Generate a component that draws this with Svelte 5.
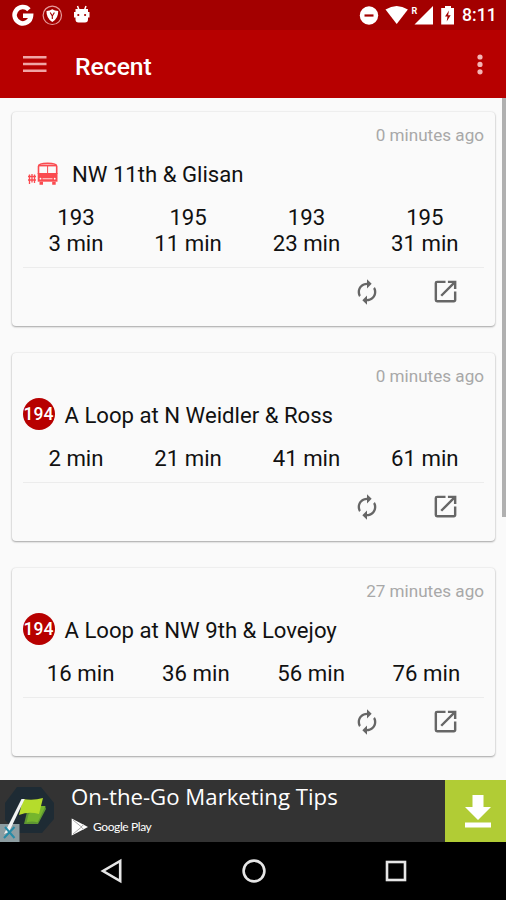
<script>
  const stops = [
    {
      name: 'NW 11th & Glisan',
      icon: 'streetcar',
      updated: '0 minutes ago',
      arrivals: [
        { vehicle: '193', time: '3 min' },
        { vehicle: '195', time: '11 min' },
        { vehicle: '193', time: '23 min' },
        { vehicle: '195', time: '31 min' }
      ]
    },
    {
      name: 'A Loop at N Weidler & Ross',
      route: '194',
      updated: '0 minutes ago',
      arrivals: [{ time: '2 min' }, { time: '21 min' }, { time: '41 min' }, { time: '61 min' }]
    },
    {
      name: 'A Loop at NW 9th & Lovejoy',
      route: '194',
      updated: '27 minutes ago',
      arrivals: [{ time: '16 min' }, { time: '36 min' }, { time: '56 min' }, { time: '76 min' }]
    }
  ];
</script>

<div class="screen">
  <div class="status">
    <svg class="notifications" width="90" height="30" viewBox="0 0 90 30">
      <path d="M28.9 9.7A8.2 8.2 0 1 0 31 15.8H23" fill="none" stroke="#fff" stroke-width="4.6" />
      <circle cx="52.3" cy="15.3" r="9.2" fill="none" stroke="#e79c9c" stroke-width="1.2" />
      <path d="M46.5 11q3.5 0 5.8-1.8Q54.6 11 58.2 11q.3 7.3-5.9 11-6.1-3.7-5.8-11z" fill="#fff" />
      <path d="M50.2 12.5l2.1 3.5 2.1-3.5M52.3 15.5v3.5" fill="none" stroke="#a30000" stroke-width="1.1" />
      <path d="M77.5 6l1.5 4M86 6l-1.5 4" stroke="#fff" stroke-width="1.5" />
      <path d="M75.5 9h12.5v3h1.5v5.5H88V19.5q0 3-3 3h-6.500q-3 0-3-3v-2H74V12h1.500z" fill="#fff" />
      <circle cx="78.3" cy="15" r="1.100" fill="#a30000" />
      <circle cx="85.100" cy="15" r="1.100" fill="#a30000" />
    </svg>
    <div class="system">
      <svg width="96" height="30" viewBox="359 0 96 30">
        <circle cx="369" cy="15.5" r="9.2" fill="#fff" />
        <path d="M364.5 15.5h9" stroke="#a30000" stroke-width="2.2" />
        <path d="M385.5 9.5q11.2-7 22.4 0L396.7 24z" fill="#fff" />
        <path d="M433 6v18.500h-18.500z" fill="#fff" />
        <text class="roaming" x="411.6" y="14">R</text>
        <path d="M445 6h6v2h3v16.500h-12.800V8h3.800z" fill="#fff" />
        <path d="M449 10.500l-4 6h2.500l-.8 5 4-6.200h-2.600z" fill="#a30000" />
      </svg>
      <span class="clock">8:11</span>
    </div>
  </div>

  <header>
    <svg class="menu" width="24" height="20" viewBox="0 0 24 20">
      <path d="M0 3.200h23.500M0 10h23.500M0 16.800h23.500" stroke="#f0a5a5" stroke-width="2.600" />
    </svg>
    <h1>Recent</h1>
    <svg width="6" height="22" viewBox="0 0 6 22">
      <g fill="#f3b5b5">
        <circle cx="3" cy="4" r="2.600" />
        <circle cx="3" cy="11.400" r="2.600" />
        <circle cx="3" cy="18.800" r="2.600" />
      </g>
    </svg>
  </header>

  <main>
    {#each stops as stop}
      <article>
        <p class="updated">{stop.updated}</p>
        <div class="stop" class:wide={stop.icon}>
          {#if stop.icon}
            <svg width="30" height="24" viewBox="0 0 30 24">
              <g fill="none" stroke="#fa4b50">
                <path d="M10.500 12V4.200Q10.500 1.200 19.600 1.200t9.100 3V12" stroke-width="1.600" />
                <path d="M10.500 3.500h18.200" stroke-width="1.800" />
                <path d="M19.600 4v8" stroke-width="1" />
                <path d="M1.500 12.500v9.500M4 12v8.500M6.500 12.500v8.500M0 14.500h8M0 18h8" stroke-width="1.300" />
              </g>
              <path d="M9.700 11h19.800v8.700H9.700z" fill="#fa4b50" />
              <path d="M14.500 16.700h10" stroke="#ffc4c4" stroke-width="1.200" />
              <circle cx="12.500" cy="16.700" r=".9" fill="#fff" />
              <circle cx="26.700" cy="16.700" r=".9" fill="#fff" />
              <path d="M11.500 19.700h3.500v3h-3.500zM24.200 19.700h3.500v3h-3.500z" fill="#fa4b50" />
            </svg>
          {:else}
            <span class="route">{stop.route}</span>
          {/if}
          <h2>{stop.name}</h2>
        </div>
        <div class="arrivals">
          {#each stop.arrivals as arrival}
            <div class="arrival">
              {#if arrival.vehicle}
                <div>{arrival.vehicle}</div>
              {/if}
              <div>{arrival.time}</div>
            </div>
          {/each}
        </div>
        <div class="actions">
          <svg width="28" height="28" viewBox="0 0 24 24">
            <path d="M12 6v3l4-4-4-4v3c-4.42 0-8 3.58-8 8 0 1.57.46 3.03 1.24 4.26L6.7 14.8A5.87 5.87 0 0 1 6 12c0-3.31 2.69-6 6-6zm6.76 1.74L17.3 9.2c.44.84.7 1.79.7 2.8 0 3.31-2.69 6-6 6v-3l-4 4 4 4v-3c4.42 0 8-3.58 8-8 0-1.57-.46-3.03-1.24-4.26z" />
          </svg>
          <svg width="29" height="29" viewBox="0 0 24 24">
            <path d="M19 19H5V5h7V3H5a2 2 0 0 0-2 2v14a2 2 0 0 0 2 2h14c1.1 0 2-.9 2-2v-7h-2v7zM14 3v2h3.59l-9.83 9.83 1.41 1.41L19 6.41V10h2V3h-7z" />
          </svg>
        </div>
      </article>
    {/each}
    <div class="scrollbar"></div>
  </main>

  <div class="ad">
    <svg class="ad-logo" width="60" height="62" viewBox="0 0 60 62">
      <path d="M17 7h24l13 16v16L42 53H18L5 40V23z" fill="#1e2b34" />
      <path d="M27 32l18-6 1 3-8 15H24z" fill="#5d9632" />
      <path d="M36 26h9.500l-8 16.500q-5-2-11 0l2-8z" fill="#76b52d" />
      <path d="M23 19q10 2 20-1L39 34q-10-3-20 1z" fill="#b5dc2c" />
      <path d="M0 44h19.500v18H0z" fill="#8d9da1" />
      <path d="M21.500 19h3.200L9 52l-5 2z" fill="#f1f3f3" />
      <path d="M5 47l9.500 11M14.500 47L4 58" stroke="#278ba7" stroke-width="2" />
    </svg>
    <div class="ad-text">
      <span class="ad-title">On-the-Go Marketing Tips</span>
      <span class="store">
        <svg width="18" height="18" viewBox="0 0 18 18">
          <path d="M.7.5L17 9 .7 17.500z" fill="#fff" />
          <path d="M2 2l8.500 7L2 16M10 9l3-2.700M10 9l3 2.700" fill="none" stroke="#aaa" stroke-width="1" />
        </svg>
        <span class="store-name">Google Play</span>
      </span>
    </div>
    <div class="download">
      <svg width="26" height="33" viewBox="0 0 26 33">
        <path d="M7.500 0h11v12H26L13 25 0 12h7.500zM0 27.500h26v5H0z" fill="#fff" />
      </svg>
    </div>
  </div>

  <nav>
    <svg width="24" height="26" viewBox="0 0 24 26">
      <path d="M20.200 3v20L3 13z" />
    </svg>
    <svg width="26" height="26" viewBox="0 0 26 26">
      <circle cx="13" cy="13" r="10.400" />
    </svg>
    <svg width="24" height="26" viewBox="0 0 24 26">
      <rect x="3" y="4" width="18" height="18" />
    </svg>
  </nav>
</div>

<style>
  :global(body) {
    margin: 0;
  }

  .screen {
    width: 506px;
    height: 900px;
    display: flex;
    flex-direction: column;
    overflow: hidden;
    background: #fafafa;
    font-family: Roboto, sans-serif;
    color: #111;
  }

  svg {
    display: block;
    flex: none;
  }

  .status {
    display: flex;
    justify-content: space-between;
    height: 30px;
    background: #a30000;
  }

  .system {
    display: flex;
    align-items: center;
    gap: 7px;
    padding-right: 10px;
  }

  .roaming {
    font-size: 9px;
    font-weight: 700;
    fill: #fff;
  }

  .clock {
    width: 34px;
    color: #fff;
    font-size: 17.6px;
    font-weight: 500;
    line-height: 32px;
    white-space: nowrap;
  }

  header {
    display: flex;
    align-items: center;
    height: 68px;
    box-sizing: border-box;
    padding: 0 23px;
    background: #b70000;
  }

  h1 {
    flex: 1;
    margin: 4px 0 0 28px;
    color: #fff;
    font-size: 24.7px;
    font-weight: 500;
  }

  main {
    flex: 1;
    position: relative;
    display: flex;
    flex-direction: column;
    gap: 27px;
    padding: 14px 11px 0 12px;
    min-height: 0;
  }

  article {
    display: flex;
    flex-direction: column;
    box-sizing: border-box;
    padding: 13px 11px 20px;
    border-radius: 4px;
    background: #fafafa;
    box-shadow: 0 1px 2px rgba(0, 0, 0, 0.32), 0 0 2px rgba(0, 0, 0, 0.12);
  }

  .updated {
    margin: 0;
    text-align: right;
    color: #a8a8a8;
    font-size: 17.1px;
    line-height: 20px;
  }

  .stop {
    display: flex;
    align-items: center;
    gap: 10px;
    height: 34px;
    margin-top: 12px;
  }

  .wide {
    gap: 14px;
    padding-left: 5px;
  }

  .route {
    width: 32px;
    height: 32px;
    margin: -2px 0 0 -0.5px;
    border-radius: 50%;
    background: #b70000;
    color: #fff;
    font-size: 17.5px;
    font-weight: 500;
    line-height: 33px;
    text-align: center;
  }

  h2 {
    margin: 0;
    font-size: 22.15px;
    font-weight: 400;
    line-height: 34px;
    white-space: nowrap;
  }

  .arrivals {
    display: flex;
    margin-top: 13px;
    padding-bottom: 11px;
    border-bottom: 1px solid #ececec;
    font-size: 22.2px;
    line-height: 26px;
    text-align: center;
  }

  .arrival {
    flex: 1 1 auto;
  }

  .actions {
    display: flex;
    align-items: center;
    justify-content: flex-end;
    gap: 50px;
    height: 38px;
    padding: 9px 24px 0 0;
    box-sizing: border-box;
    fill: #666;
  }

  .scrollbar {
    position: absolute;
    top: 0;
    right: 0;
    width: 4px;
    height: 419px;
    background: #b0b0b0;
  }

  .ad {
    display: flex;
    height: 62px;
    background: #333;
  }

  .ad-text {
    flex: 1;
    display: flex;
    flex-direction: column;
    padding-left: 11px;
    color: #fff;
  }

  .ad-title {
    font-family: 'Open Sans', sans-serif;
    font-size: 22.2px;
    line-height: 34px;
    white-space: nowrap;
  }

  .store {
    display: flex;
    align-items: center;
    gap: 4px;
    margin-top: 3px;
  }

  .store-name {
    font-family: Lato, sans-serif;
    font-size: 12px;
    line-height: 19px;
    letter-spacing: -0.4px;
  }

  .download {
    display: flex;
    align-items: center;
    justify-content: center;
    width: 61px;
    padding-left: 4px;
    box-sizing: border-box;
    background: #b1cc35;
  }

  nav {
    display: flex;
    align-items: center;
    justify-content: space-between;
    height: 58px;
    box-sizing: border-box;
    padding: 0 98px 0 100px;
    background: #000;
    fill: none;
    stroke: #e6e6e6;
    stroke-width: 2.6;
  }
</style>
